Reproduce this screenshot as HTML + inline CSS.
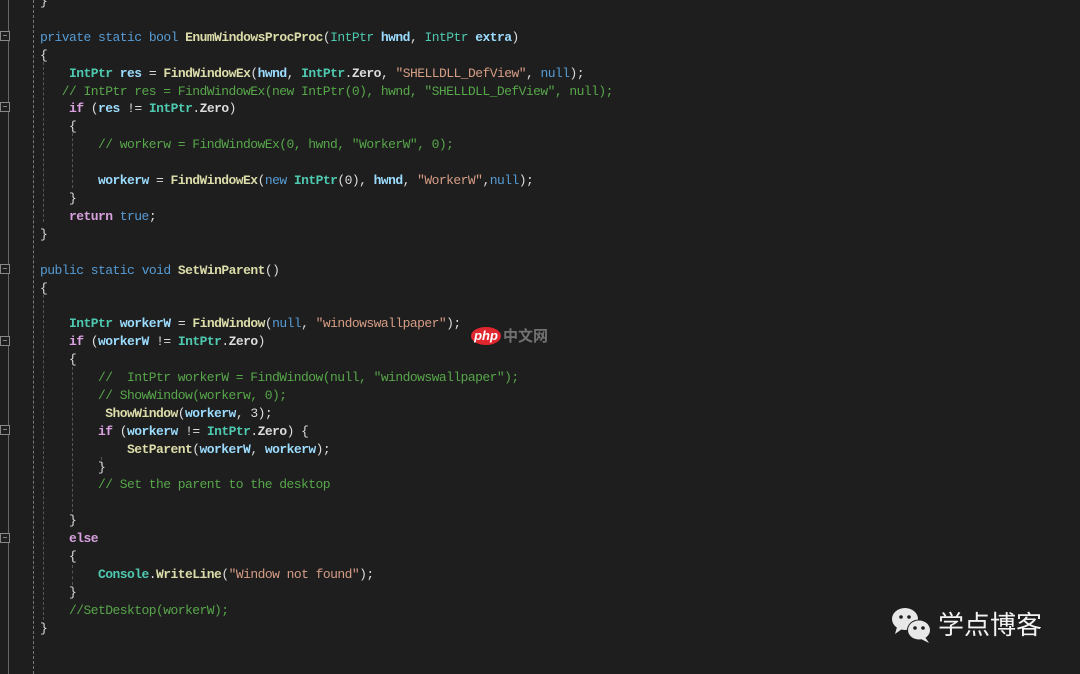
<!DOCTYPE html>
<html><head><meta charset="utf-8"><style>
html,body{margin:0;padding:0;background:#1e1e1e;width:1080px;height:674px;overflow:hidden;position:relative}
pre{position:absolute;left:40px;top:-7px;margin:0;font-family:"Liberation Mono","Noto Sans CJK SC",monospace;font-size:13px;line-height:17.9px;letter-spacing:-0.55px;color:#dcdcdc}
.k{color:#569cd6}.t{color:#4ec9b0}.m{color:#dcdcaa;font-weight:bold}.p{color:#9cdcfe;font-weight:bold}.s{color:#d69d85}.c{color:#57a64a}.f{color:#d8a0df;font-weight:bold}.tb{color:#4ec9b0;font-weight:bold}
.g{position:absolute;top:0;height:674px;border-left:1px dashed #777}
.fb{position:absolute;left:0;width:8px;height:8px;border:1px solid #888;background:#1e1e1e;font:8px/8px sans-serif;color:#ccc;text-align:center}
.ig{position:absolute;border-left:1px dashed #555}
</style></head><body>
<div class="g" style="left:8px;border-left:1px solid #666"></div>
<div class="g" style="left:33px"></div>
<div class="fb" style="top:31px">−</div>
<div class="fb" style="top:102px">−</div>
<div class="fb" style="top:264px">−</div>
<div class="fb" style="top:336px">−</div>
<div class="fb" style="top:425px">−</div>
<div class="fb" style="top:533px">−</div>
<div class="ig" style="left:43px;top:62px;height:160px"></div>
<div class="ig" style="left:72px;top:133px;height:55px"></div>
<div class="ig" style="left:43px;top:295px;height:325px"></div>
<div class="ig" style="left:72px;top:367px;height:145px"></div>
<div class="ig" style="left:101px;top:457px;height:8px"></div>
<div class="ig" style="left:72px;top:565px;height:20px"></div>
<pre>}

<span class="k">private</span> <span class="k">static</span> <span class="k">bool</span> <span class="m">EnumWindowsProcProc</span>(<span class="t">IntPtr</span> <span class="p">hwnd</span>, <span class="t">IntPtr</span> <span class="p">extra</span>)
{
    <span class="tb">IntPtr</span> <span class="p">res</span> = <span class="m">FindWindowEx</span>(<span class="p">hwnd</span>, <span class="tb">IntPtr</span>.<span style="font-weight:bold">Zero</span>, <span class="s">"SHELLDLL_DefView"</span>, <span class="k">null</span>);
   <span class="c">// IntPtr res = FindWindowEx(new IntPtr(0), hwnd, "SHELLDLL_DefView", null);</span>
    <span class="f">if</span> (<span class="p">res</span> != <span class="tb">IntPtr</span>.<span style="font-weight:bold">Zero</span>)
    {
        <span class="c">// workerw = FindWindowEx(0, hwnd, "WorkerW", 0);</span>

        <span class="p">workerw</span> = <span class="m">FindWindowEx</span>(<span class="k">new</span> <span class="tb">IntPtr</span>(0), <span class="p">hwnd</span>, <span class="s">"WorkerW"</span>,<span class="k">null</span>);
    }
    <span class="f">return</span> <span class="k">true</span>;
}

<span class="k">public</span> <span class="k">static</span> <span class="k">void</span> <span class="m">SetWinParent</span>()
{

    <span class="tb">IntPtr</span> <span class="p">workerW</span> = <span class="m">FindWindow</span>(<span class="k">null</span>, <span class="s">"windowswallpaper"</span>);
    <span class="f">if</span> (<span class="p">workerW</span> != <span class="tb">IntPtr</span>.<span style="font-weight:bold">Zero</span>)
    {
        <span class="c">//  IntPtr workerW = FindWindow(null, "windowswallpaper");</span>
        <span class="c">// ShowWindow(workerw, 0);</span>
         <span class="m">ShowWindow</span>(<span class="p">workerw</span>, 3);
        <span class="f">if</span> (<span class="p">workerw</span> != <span class="tb">IntPtr</span>.<span style="font-weight:bold">Zero</span>) {
            <span class="m">SetParent</span>(<span class="p">workerW</span>, <span class="p">workerw</span>);
        }
        <span class="c">// Set the parent to the desktop</span>

    }
    <span class="f">else</span>
    {
        <span class="tb">Console</span>.<span class="m">WriteLine</span>(<span class="s">"Window not found"</span>);
    }
    <span class="c">//SetDesktop(workerW);</span>
}</pre>
<div style="position:absolute;left:471px;top:327px;width:30px;height:18px;border-radius:50%;background:#e0262f;color:#fff;font:italic bold 13px/18px 'Liberation Sans',sans-serif;text-align:center">php</div>
<div style="position:absolute;left:503px;top:326px;color:#888;font:bold 15px/20px 'Noto Sans CJK SC',sans-serif;opacity:.8">中文网</div>
<svg style="position:absolute;left:889px;top:605px" width="46" height="40" viewBox="0 0 46 40">
<ellipse cx="16" cy="14" rx="13" ry="11" fill="#e8e8e8"/><path d="M8 22 L6 29 L13 24Z" fill="#e8e8e8"/>
<circle cx="12" cy="12" r="1.8" fill="#1e1e1e"/><circle cx="20" cy="12" r="1.8" fill="#1e1e1e"/>
<ellipse cx="30" cy="25" rx="12" ry="10.5" fill="#1e1e1e"/><ellipse cx="30" cy="25" rx="11" ry="9.5" fill="#e8e8e8"/>
<path d="M36 32 L40 38 L32 34Z" fill="#e8e8e8"/>
<circle cx="26" cy="23" r="1.8" fill="#1e1e1e"/><circle cx="34" cy="23" r="1.8" fill="#1e1e1e"/>
</svg>
<div style="position:absolute;left:938px;top:608px;color:#f2f2f2;font:26px/32px 'Noto Sans CJK SC',sans-serif">学点博客</div>
</body></html>
